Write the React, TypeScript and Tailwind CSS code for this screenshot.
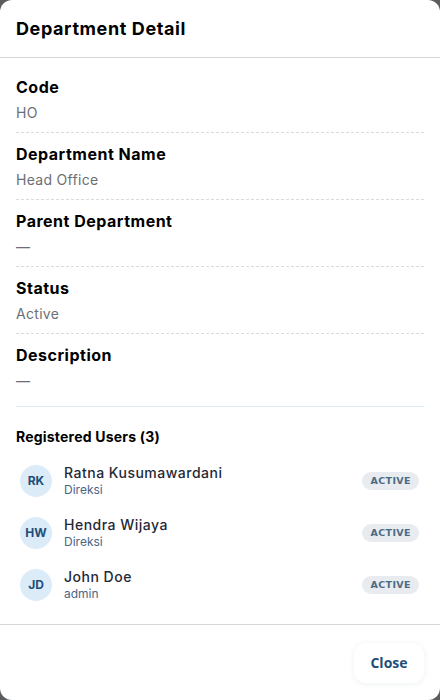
import React from "react";

type Field = { label: string; value: string };
type User = { initials: string; name: string; role: string };

const fields: Field[] = [
  { label: "Code", value: "HO" },
  { label: "Department Name", value: "Head Office" },
  { label: "Parent Department", value: "—" },
  { label: "Status", value: "Active" },
  { label: "Description", value: "—" },
];

const users: User[] = [
  { initials: "RK", name: "Ratna Kusumawardani", role: "Direksi" },
  { initials: "HW", name: "Hendra Wijaya", role: "Direksi" },
  { initials: "JD", name: "John Doe", role: "admin" },
];

const App: React.FC = () => {
  return (
    <div className="h-[700px] w-[440px] bg-[#5b5c5e] font-['Inter',sans-serif]">
      <div className="flex h-full flex-col rounded-xl bg-white">
        {/* header */}
        <div className="flex h-[58px] items-center border-b border-[#d4d6da] px-4">
          <h2 className="text-[18px] font-bold tracking-[0.6px] text-black">
            Department Detail
          </h2>
        </div>

        {/* body */}
        <div className="flex-1 px-4 pt-[18px]">
          {fields.map((f, i) => (
            <div
              key={f.label}
              className={`pt-[1px] ${
                i < fields.length - 1
                  ? "mb-[10px] border-b border-dashed border-[#d8dade] pb-[9px]"
                  : "mb-[15px] border-b border-[#dcebf5] pb-[15px]"
              }`}
            >
              <div className="text-[16px] font-bold leading-[20px] tracking-[0.5px] text-black">
                {f.label}
              </div>
              <div className="mt-[6px] text-[14px] leading-[20px] tracking-[0.3px] text-[#6b6f75]">
                {f.value}
              </div>
            </div>
          ))}

          <h3 className="mt-[19px] text-[14px] font-bold tracking-[0.2px] text-black">
            Registered Users (3)
          </h3>

          <ul className="mt-[17px] flex flex-col gap-[18px]">
            {users.map((u) => (
              <li key={u.initials} className="flex items-center pl-1">
                <div className="flex h-8 w-8 items-center justify-center rounded-full bg-[#dcebf8] text-[12px] font-bold text-[#1f4e79]">
                  {u.initials}
                </div>
                <div className="ml-3 flex-1">
                  <div className="text-[14px] font-medium leading-[18px] tracking-[0.5px] text-[#1f2937]">
                    {u.name}
                  </div>
                  <div className="text-[12px] leading-[16px] text-[#4a6584]">
                    {u.role}
                  </div>
                </div>
                <span className="mr-[5px] rounded-full bg-[#e8ecf0] px-2 py-[2px] font-['DejaVu_Sans',sans-serif] text-[9.5px] font-bold tracking-[0.4px] text-[#4d6a85]">
                  ACTIVE
                </span>
              </li>
            ))}
          </ul>
        </div>

        {/* footer */}
        <div className="flex h-[76px] items-center justify-end border-t border-[#d4d6da] px-4">
          <button className="h-10 w-[70px] rounded-xl bg-white font-['Open_Sans',sans-serif] text-[14px] font-bold text-[#1f4e79] shadow-[0_1px_6px_rgba(30,60,100,0.08)]">
            Close
          </button>
        </div>
      </div>
    </div>
  );
};

export default App;
